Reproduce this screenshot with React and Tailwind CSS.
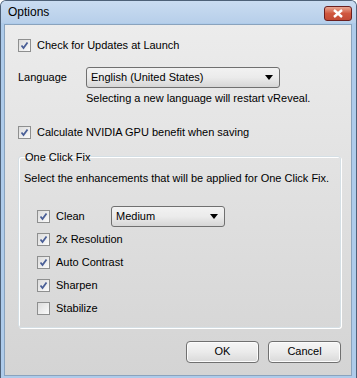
import { useState } from "react";

const font = { fontFamily: '"Liberation Sans", Arial, sans-serif' };

function Check({ checked, label, onToggle }) {
  return (
    <label className="flex items-center gap-[6px] h-[13px] cursor-default" onClick={onToggle}>
      <span className="w-[13px] h-[13px] border border-[#8e8f8f] bg-gradient-to-br from-[#dcdcdc] to-[#fbfbfb] flex items-center justify-center">
        {checked && (
          <svg width="9" height="9" viewBox="0 0 9 9">
            <path d="M1.5 4.5 L3.5 7 L7.5 1.5" stroke="#4a5f97" strokeWidth="1.8" fill="none" />
          </svg>
        )}
      </span>
      <span className="text-[11px] text-black leading-none">{label}</span>
    </label>
  );
}

function Select({ value, width }) {
  return (
    <div
      className={`${width} h-[21px] rounded-[3px] border border-[#707070] bg-gradient-to-b from-[#f2f2f2] via-[#ebebeb] to-[#d6d6d6] flex items-center justify-between pl-[4px] pr-[6px]`}
    >
      <span className="text-[11px] text-black">{value}</span>
      <svg width="8" height="5" viewBox="0 0 8 5">
        <path d="M0 0 H8 L4 5 Z" fill="#000" />
      </svg>
    </div>
  );
}

function Button({ children }) {
  return (
    <button className="w-[73px] h-[22px] rounded-[4px] border border-[#707070] bg-gradient-to-b from-[#f6f6f6] via-[#ebebeb] to-[#d9d9d9] shadow-[inset_0_0_0_1px_#fcfcfc] text-[11px] text-black">
      {children}
    </button>
  );
}

export default function App() {
  const [opts, setOpts] = useState({
    updates: true,
    nvidia: true,
    clean: true,
    res: true,
    contrast: true,
    sharpen: true,
    stabilize: false,
  });
  const toggle = (k) => setOpts((p) => ({ ...p, [k]: !p[k] }));

  return (
    <div style={font} className="w-[357px] h-[378px] bg-[#aecbea] border-l border-t border-r border-[#4e6178] rounded-t-[6px] flex flex-col overflow-hidden">
      {/* title bar */}
      <div className="h-[22px] flex items-center justify-between pl-[7px] pr-[4px] bg-gradient-to-b from-[#cadcf1] to-[#b7cfea]">
        <span className="text-[12px] text-black">Options</span>
        <div className="w-[28px] h-[15px] mt-[2px] rounded-[3px] border border-[#6b1f1f] bg-gradient-to-b from-[#e8a693] via-[#d0573f] to-[#c24a35] flex items-center justify-center">
          <svg width="12" height="9" viewBox="0 0 12 9">
            <path d="M2 1 L10 8 M10 1 L2 8" stroke="#fff" strokeWidth="2.4" />
          </svg>
        </div>
      </div>

      {/* client area */}
      <div className="flex-1 ml-[3px] mr-[4px] mb-[2px] mt-[1px] border border-[#8aa3bd] bg-gradient-to-b from-[#ececec] to-[#d4d4d4] flex flex-col pl-[13px] pr-[10px] pt-[14px]">
        <Check checked={opts.updates} label="Check for Updates at Launch" onToggle={() => toggle("updates")} />

        <div className="flex items-center mt-[15px]">
          <span className="w-[68px] text-[11px] text-black">Language</span>
          <Select value="English (United States)" width="w-[194px]" />
        </div>
        <div className="ml-[68px] mt-[2px] text-[11px] text-black">
          Selecting a new language will restart vReveal.
        </div>

        <div className="mt-[19px]">
          <Check checked={opts.nvidia} label="Calculate NVIDIA GPU benefit when saving" onToggle={() => toggle("nvidia")} />
        </div>

        <fieldset className="mt-[10px] border border-[#d5dfe5] rounded-[3px] px-[5px] pb-[12px] shadow-[inset_1px_1px_0_#fff,1px_1px_0_#fff]">
          <legend className="px-[1px] text-[11px] text-black">One Click Fix</legend>
          <div className="text-[11px] text-black mt-[5px]">
            Select the enhancements that will be applied for One Click Fix.
          </div>
          <div className="mt-[23px] pl-[13px] flex flex-col gap-[10px]">
            <div className="flex items-center">
              <div className="w-[74px]">
                <Check checked={opts.clean} label="Clean" onToggle={() => toggle("clean")} />
              </div>
              <div className="-my-[4px]">
                <Select value="Medium" width="w-[114px]" />
              </div>
            </div>
            <Check checked={opts.res} label="2x Resolution" onToggle={() => toggle("res")} />
            <Check checked={opts.contrast} label="Auto Contrast" onToggle={() => toggle("contrast")} />
            <Check checked={opts.sharpen} label="Sharpen" onToggle={() => toggle("sharpen")} />
            <Check checked={opts.stabilize} label="Stabilize" onToggle={() => toggle("stabilize")} />
          </div>
        </fieldset>

        <div className="flex justify-end gap-[9px] mt-[13px]">
          <Button>OK</Button>
          <Button>Cancel</Button>
        </div>
      </div>
    </div>
  );
}
